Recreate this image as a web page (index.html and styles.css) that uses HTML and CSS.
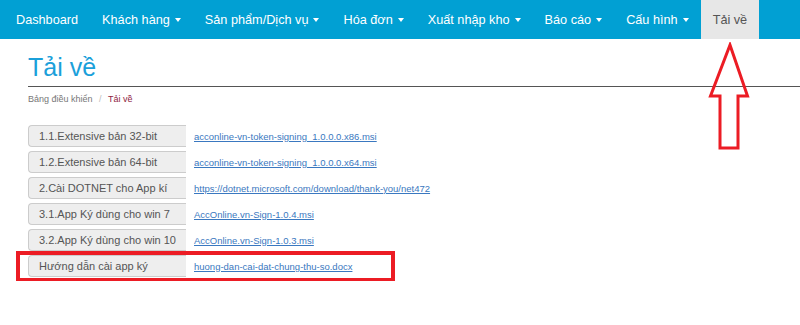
FILE: index.html
```html
<!DOCTYPE html>
<html lang="vi">

<head>
    <meta charset="UTF-8">
    <meta name="viewport" content="width=device-width, initial-scale=1.0">
    <title>Tải về</title>
    <link rel="stylesheet" href="styles.css">
</head>

<body>
    <nav class="navbar">
        <a class="nav-item" href="#">Dashboard</a>
        <a class="nav-item" href="#">Khách hàng <span class="caret"></span></a>
        <a class="nav-item" href="#">Sản phẩm/Dịch vụ <span class="caret"></span></a>
        <a class="nav-item" href="#">Hóa đơn <span class="caret"></span></a>
        <a class="nav-item" href="#">Xuất nhập kho <span class="caret"></span></a>
        <a class="nav-item" href="#">Báo cáo <span class="caret"></span></a>
        <a class="nav-item" href="#">Cấu hình <span class="caret"></span></a>
        <a class="nav-item active" href="#">Tải về</a>
    </nav>

    <div class="page">
        <h1 class="page-title">Tải về</h1>
        <div class="breadcrumb">
            <span>Bảng điều khiển</span>
            <span class="sep">/</span>
            <span class="current">Tải về</span>
        </div>

        <div class="downloads">
            <div class="row">
                <span class="label">1.1.Extensive bản 32-bit</span>
                <a href="#">acconline-vn-token-signing_1.0.0.0.x86.msi</a>
            </div>
            <div class="row">
                <span class="label">1.2.Extensive bản 64-bit</span>
                <a href="#">acconline-vn-token-signing_1.0.0.0.x64.msi</a>
            </div>
            <div class="row">
                <span class="label">2.Cài DOTNET cho App kí</span>
                <a href="#">https://dotnet.microsoft.com/download/thank-you/net472</a>
            </div>
            <div class="row">
                <span class="label">3.1.App Ký dùng cho win 7</span>
                <a href="#">AccOnline.vn-Sign-1.0.4.msi</a>
            </div>
            <div class="row">
                <span class="label">3.2.App Ký dùng cho win 10</span>
                <a href="#">AccOnline.vn-Sign-1.0.3.msi</a>
            </div>
            <div class="row">
                <span class="label">Hướng dẫn cài app ký</span>
                <a href="#">huong-dan-cai-dat-chung-thu-so.docx</a>
            </div>
            <div class="highlight-box"></div>
        </div>
    </div>

    <!-- annotation arrow pointing to the active tab -->
    <svg class="arrow" width="44" height="112" viewBox="0 0 44 112">
        <path d="M22 3 L39.5 54 L30 54 L30 106 L12 106 L12 54 L2.5 54 Z" fill="none" stroke="#ec1c24" stroke-width="3" stroke-linejoin="miter" />
    </svg>
</body>

</html>
```

FILE: styles.css
```css
body {
    font-family: "Liberation Sans", Arial, sans-serif;
    margin: 0;
    padding: 0;
    background-color: #fff;
    position: relative;
}

.navbar {
    display: flex;
    height: 39px;
    padding-left: 4px;
    background-color: #01a0d3;
}

.nav-item {
    display: flex;
    align-items: center;
    padding: 0 12px;
    color: #fff;
    font-size: 12.7px;
    text-decoration: none;
}

.nav-item.active {
    background-color: #e7e7e7;
    color: #555;
}

.caret {
    display: inline-block;
    width: 0;
    height: 0;
    margin-left: 5px;
    border-top: 4px solid #fff;
    border-left: 3.5px solid transparent;
    border-right: 3.5px solid transparent;
}

.page {
    padding-left: 28px;
}

.page-title {
    margin: 0;
    padding-top: 14px;
    padding-bottom: 5px;
    font-size: 25px;
    font-weight: normal;
    line-height: 28px;
    color: #1ba0da;
    border-bottom: 1px solid #555;
}

.breadcrumb {
    margin-top: 7px;
    font-size: 9px;
    color: #777;
}

.breadcrumb .sep {
    margin: 0 4px;
    color: #bbb;
}

.breadcrumb .current {
    color: #8e2242;
}

.downloads {
    position: relative;
    margin-top: 21px;
}

.row {
    display: flex;
    align-items: center;
    gap: 8px;
    height: 22px;
    margin-bottom: 4px;
}

.label {
    box-sizing: border-box;
    width: 158px;
    flex-shrink: 0;
    height: 22px;
    padding-left: 10px;
    line-height: 20px;
    font-size: 11px;
    white-space: nowrap;
    overflow: hidden;
    color: #555;
    background-color: #eee;
    border: 1px solid #ccc;
    border-right: none;
    border-radius: 4px 0 0 4px;
}

.row a {
    font-size: 9.5px;
    color: #3a78c0;
}

.highlight-box {
    position: absolute;
    left: -12px;
    top: 126px;
    width: 371px;
    height: 23px;
    border: 4px solid #ec1c24;
}

.arrow {
    position: absolute;
    left: 708px;
    top: 42px;
}
```
